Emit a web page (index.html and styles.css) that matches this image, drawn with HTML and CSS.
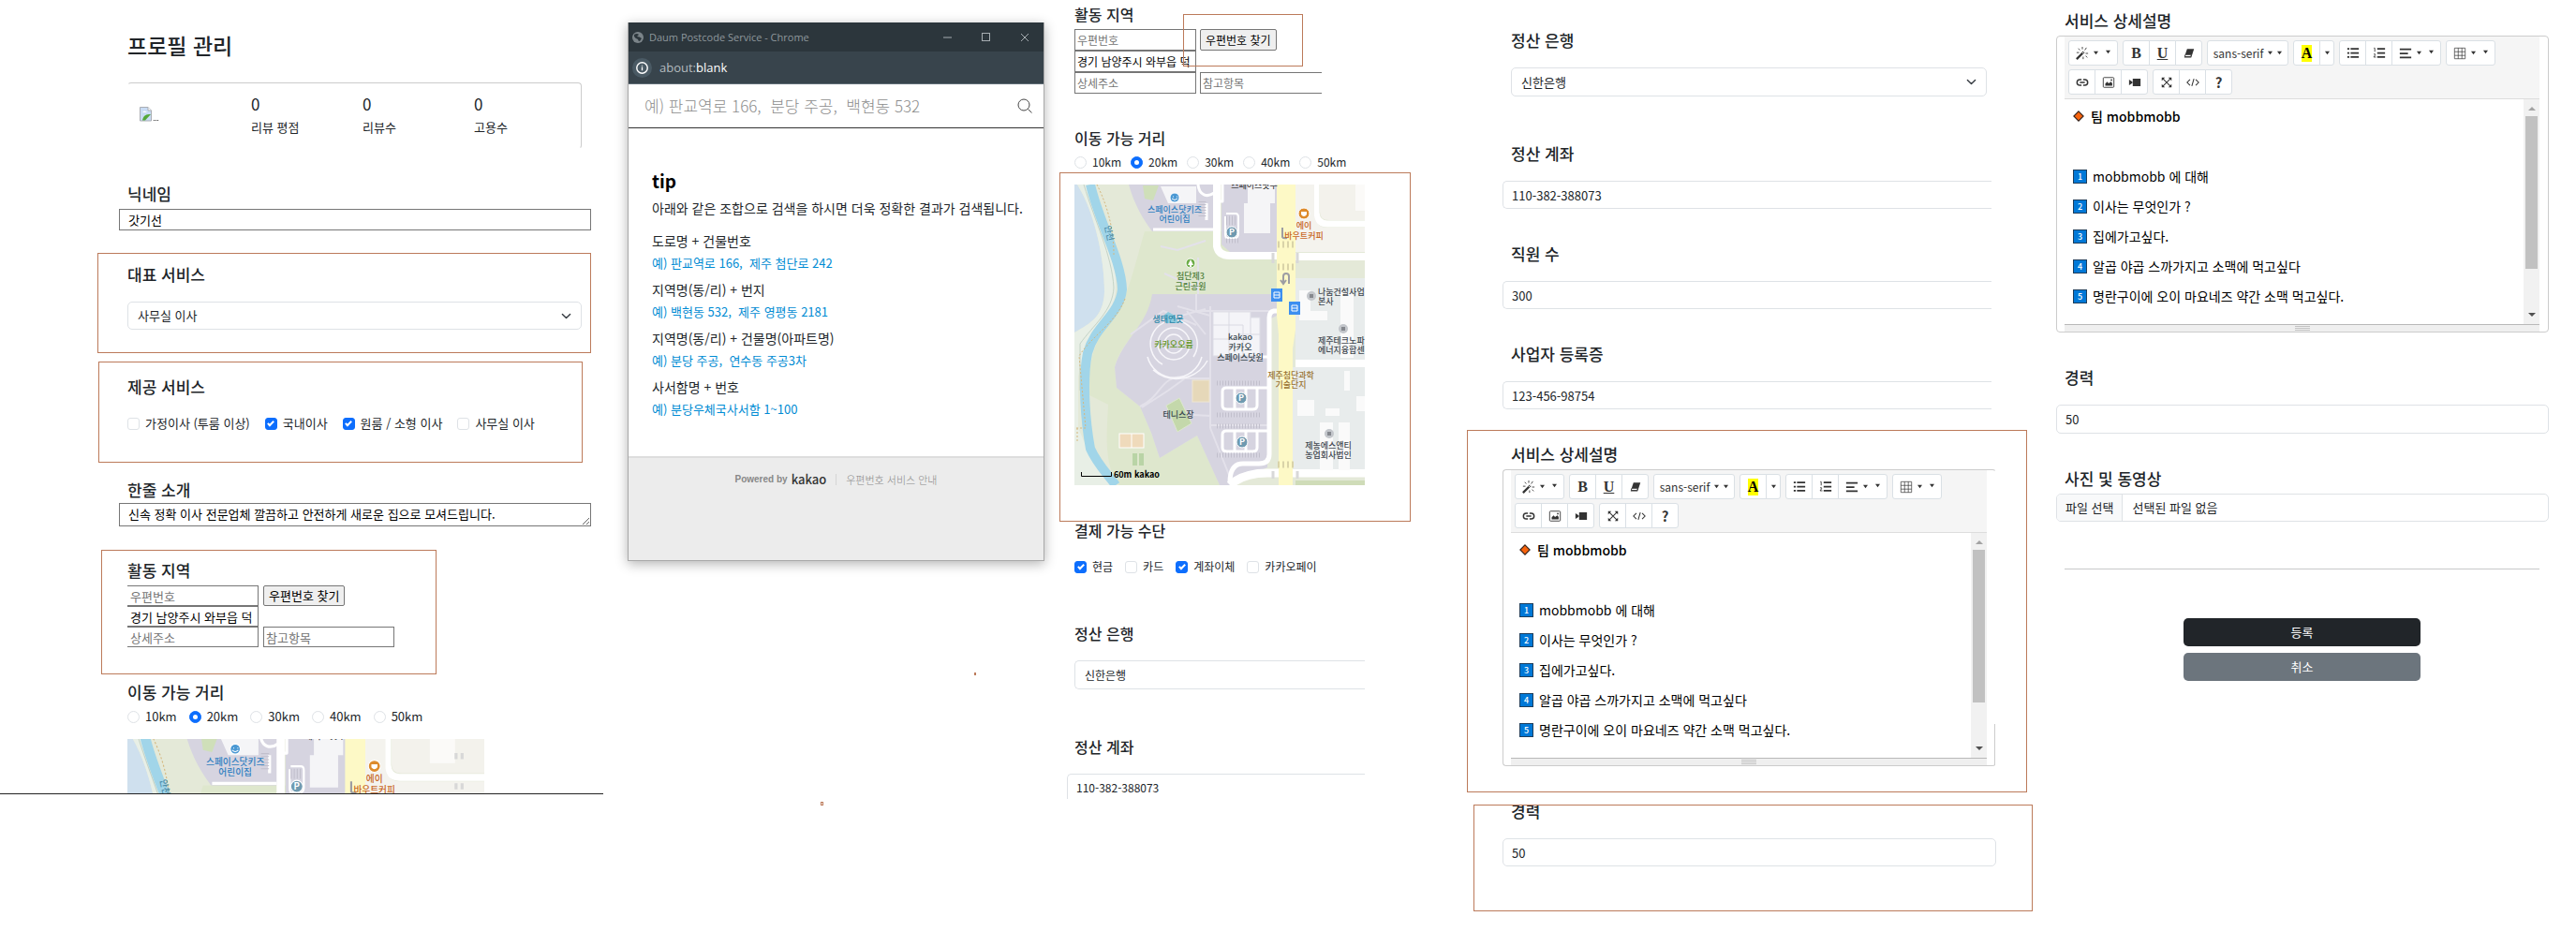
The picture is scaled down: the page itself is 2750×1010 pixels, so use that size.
FILE: index.html
```
<!DOCTYPE html>
<html lang="ko">
<head>
<meta charset="utf-8">
<meta name="viewport" content="width=device-width, initial-scale=1">
<title>프로필 관리</title>
<link rel="stylesheet" href="styles.css">
</head>
<body>
<svg class="defs" aria-hidden="true">
  <defs>
    <g id="map-art">
      <rect width="354" height="321" fill="#e4e9d8"/>
      <path d="M0 0H3C22 30 32 80 32 115C31 140 18 148 0 158Z" fill="#cfe0ee"/>
      <path d="M3 0H17C26 36 52 90 42 124C32 150 10 170 4 205V260L20 296L40 321H0V158C18 148 31 140 32 115C32 80 22 30 3 0Z" fill="#e8efe6"/>
      <path d="M10 0C22 40 40 75 42 110C41 135 20 150 6 170V220" fill="none" stroke="#c5d3c6"/>
      <path d="M75 50H216V117H83C84 145 50 165 43 195L45 217L70 237L82 265L91 292L131 268L155 321H48C30 300 35 260 36 235L16 225C14 190 22 160 45 140C60 110 66 80 75 50Z" fill="#dee7cd"/>
      <path d="M17 0C26 40 50 80 51 112C48 140 22 150 14 180C8 210 12 255 17 282C25 300 38 312 44 321" fill="none" stroke="#a1d5e9" stroke-width="10"/>
      <path d="M24 0C34 20 42 45 42 75M54 122C44 148 20 160 5 183L12 260H0M3 260V276" fill="none" stroke="#d5b77e" stroke-dasharray="2 2"/>
      <path d="M58 0C64 22 74 38 83 50H150V0ZM157 0H216V72H166L157 64ZM83 117H216V140L206 145V302L166 321H155L131 268L91 292L82 265L70 237L45 217L43 195C52 165 78 150 83 117Z" fill="#d6d4e0"/>
      <path d="M73 1H90L84 17L75 15Z" fill="#cfdfb9"/>
      <path d="M92 2H130V20H100ZM185 0H214V20H209V52H181V20H185Z" fill="#f5f5f7"/>
      <g fill="none" stroke="#e3e1ea" stroke-width="2">
        <path d="M92 66L110 70L140 60M96 95L130 110M132 78V117M130 117V135H216M145 130V260M145 207H118L100 220L72 238M145 247L110 245M145 257H206M70 237C95 225 90 205 118 205M60 160L95 135L130 150M145 260L165 310"/>
        <path d="M120 135L140 160M110 130L145 140M114 140L140 133"/>
      </g>
      <path d="M148 136H188V142H198V183H148Z" fill="#f4f4f8" stroke="#dddde6"/>
      <path d="M148 150H180V183M165 136V183M188 142V165H148M198 160H175" fill="none" stroke="#dadae3"/>
      <g fill="none" stroke="#f7f6fa" stroke-width="1.5">
        <circle cx="106" cy="170" r="10"/><circle cx="106" cy="170" r="17"/>
        <path d="M94 192A25 25 0 1 1 127 184M78 184A30 30 0 0 0 136 184M84 198A38 38 0 0 0 142 188"/>
      </g>
      <path d="M95 140L100 136L106 139L112 148H98Z" fill="#8cc9dd"/>
      <rect x="126" y="209" width="18" height="23" fill="#e6d8b9" stroke="#efe6d0"/>
      <path d="M98 236L112 228L125 255L110 264Z" fill="#c4d8ab" stroke="#dce8cc"/>
      <rect x="48" y="266" width="26" height="15" fill="#efdabb" stroke="#fff"/><path d="M61 266V281" stroke="#fff"/>
      <path d="M62 287H67V300H62ZM69 287H74V300H69Z" fill="#b9d4a6"/>
      <g fill="none" stroke="#fff" stroke-linejoin="round">
        <path d="M84 48H148" stroke-width="3"/>
        <path d="M152 0V66Q154 76 166 76H216M236 77H354" stroke-width="8"/>
        <path d="M162 31H172Q175 31 175 35V52Q175 57 171 57H163Q161 57 161 53V34" stroke-width="2"/>
        <path d="M158 0V18H153M132 0C133 12 142 14 149 9M141 20V38" stroke-width="3"/>
        <path d="M258 0V30Q259 42 270 42H354" stroke-width="7"/>
        <path d="M216 135H213Q208 136 208 142V288Q208 298 197 298H180Q166 298 166 318" stroke-width="5"/>
        <path d="M236 191H354M260 191V180M290 195V305" stroke-width="8"/>
        <path d="M166 321Q180 308 206 308H354" stroke-width="9"/>
        <path d="M208 217H162Q158 217 158 221V236Q158 240 163 240H190Q195 240 195 236V218M208 263H162Q158 263 158 267V281Q158 285 163 285H190Q195 285 195 281V264M171 218V240M183 218V240M171 264V285M183 264V285M195 184H206" stroke-width="3"/>
      </g>
      <path d="M162 36H174M162 41H174M162 60H176M135 18V36M138 18V36M152 212H200M152 246H200M152 258H200M152 289H200" fill="none" stroke="#c1bfcc" stroke-width="5" stroke-dasharray="1 2"/>
      <path d="M216 0H236V155L233 175V321H218V160L216 140Z" fill="#fdf9c6"/>
      <path d="M236 0H256V33Q258 46 270 46H354V72H236Z" fill="#f4f3ee"/>
      <path d="M262 0H354V38H272Q262 38 262 29Z" fill="#f3f2ec"/>
      <path d="M300 0H325V28H300Z" fill="#fbfaf8"/>
      <path d="M236 100H354V187H236ZM233 195H354V304H233Z" fill="#e8ecec"/>
      <path d="M240 113H252V135H270V145H240ZM284 115H298V185H284ZM238 230H256V247H238ZM268 239H283V247H268ZM288 199H294V220H288ZM262 254H276V305H262ZM282 254H294V305H282ZM301 226H312V242H301Z" fill="#fafafa"/>
      <path d="M236 316H354V321H236Z" fill="#cfdcb8"/>
      <path d="M217 64H235M217 88H235M217 299H235" stroke="#d9d3a8" stroke-width="7" stroke-dasharray="2 3"/>
      <path d="M212 73V84M238 73V84M212 306V314M238 306V314M326 18V24M332 18V24M326 48V54M332 48V54" stroke="#d8d8d8" stroke-width="3"/>
      <path d="M222 46V56Q223 58 227 57M229 106V98Q229 95 226 95Q223 95 223 98V105M220 102L223 106L226 102" fill="none" stroke="#9d9da3" stroke-width="2"/>
      <g fill="#3d8ff0"><rect x="210" y="111" width="12" height="14"/><rect x="229" y="125" width="12" height="14"/></g>
      <g fill="none" stroke="#fff"><path d="M213 115H219V121H213ZM213 118H219"/><path d="M232 129H238V135H232ZM232 132H238"/></g>
      <g stroke="#fff"><circle cx="107" cy="14" r="5" fill="#4a98d3"/><circle cx="245" cy="31" r="6" fill="#dd8b2c"/><circle cx="124" cy="84" r="5" fill="#6cac46"/>
        <circle cx="168" cy="51" r="6" fill="#6f9ab0"/><circle cx="178" cy="228" r="6" fill="#6f9ab0"/><circle cx="179" cy="275" r="6" fill="#6f9ab0"/></g>
      <path d="M105 13h1M109 13h1M104 15Q107 18 110 15" stroke="#fff" fill="none"/>
      <path d="M242 29H248V32Q245 36 242 32ZM124 80L127 86H121ZM123 86h2v2h-2z" fill="#fff"/>
      <g fill="#c3c6cb"><circle cx="253" cy="119" r="5"/><circle cx="287" cy="154" r="5"/><circle cx="272" cy="266" r="5"/></g>
      <g fill="#85888e"><path d="M251 117h4v4h-4zM285 152h4v4h-4zM270 264h4v4h-4z"/></g>
      <g class="map-text">
        <g fill="#fff" font-weight="700"><text x="168" y="54">P</text><text x="178" y="231">P</text><text x="179" y="278">P</text></g>
        <g fill="#2f7fc0"><text x="107" y="30">스페이스닷키즈</text><text x="107" y="40">어린이집</text></g>
        <g fill="#c8651b"><text x="245" y="47">에이</text><text x="245" y="58">바우트커피</text></g>
        <g fill="#4f7f3a"><text x="124" y="101">첨단제3</text><text x="124" y="112">근린공원</text></g>
        <text x="100" y="147" fill="#2b87a8">생태연못</text>
        <text x="106" y="174" fill="#5f9420">카카오오름</text>
        <text x="192" y="4" fill="#444">스페이스닷투</text>
        <g fill="#37474f"><text x="177" y="166">kakao</text><text x="177" y="177">카카오</text><text x="177" y="188">스페이스닷원</text><text x="111" y="249">테니스장</text></g>
        <g fill="#9a7434"><text x="231" y="207">제주첨단과학</text><text x="231" y="217">기술단지</text></g>
        <g fill="#3f474f" class="map-start"><text x="260" y="118">나눔건설사업본부</text><text x="260" y="128">본사</text><text x="260" y="170">제주테크노파크</text><text x="260" y="180">에너지융합센터</text></g>
        <g fill="#3f474f"><text x="271" y="282">제농에스앤티</text><text x="271" y="292">농업회사법인</text></g>
        <text x="37" y="55" fill="#4b8ca8" transform="rotate(78 37 52)">안천</text>
      </g>
    </g>

    <symbol id="i-wand" viewBox="0 0 16 16"><path d="M1 15L10 6" stroke="currentColor" stroke-width="2.6"/><path d="M8 8L10 6" stroke="#fff" stroke-width="1"/><path d="M8 0V3M3 2L5 4M13 1L11 4M4 7H1M12 8H15M12 11L14 13M9 12V15" stroke="currentColor" stroke-width="1"/></symbol>
    <symbol id="i-eraser" viewBox="0 0 16 16"><path d="M5.500 2.500H14L10.500 13H2Z" fill="currentColor"/><path d="M3.400 9.500H10.800L9.900 12H2.700Z" fill="#fff" stroke="currentColor"/></symbol>
    <symbol id="i-ul" viewBox="0 0 16 16"><path d="M1 2.500H3.500M1 7.500H3.500M1 12.500H3.500M5 2.500H15M5 7.500H15M5 12.500H15" stroke="currentColor" stroke-width="2"/></symbol>
    <symbol id="i-ol" viewBox="0 0 16 16"><path d="M5.500 2.500H15M5.500 7.500H15M5.500 12.500H15" stroke="currentColor" stroke-width="2"/><path d="M1.500 1.500H2.500V6M1.200 9Q3.500 8 3 10L1.200 12.500H4" fill="none" stroke="currentColor"/></symbol>
    <symbol id="i-align" viewBox="0 0 16 16"><path d="M1 3H15M1 8H11M1 13H15" stroke="currentColor" stroke-width="2"/></symbol>
    <symbol id="i-table" viewBox="0 0 16 16"><path d="M1.500 1.500H14.500V14.500H1.500ZM1.500 6H14.500M1.500 10.500H14.500M6 1.500V14.500M10.500 1.500V14.500" fill="none" stroke="currentColor" stroke-width=".8"/></symbol>
    <symbol id="i-link" viewBox="0 0 16 16"><path d="M7 11.500H5A3.500 3.500 0 0 1 5 4.500H7M9 4.500H11A3.500 3.500 0 0 1 11 11.500H9M5 8H11" fill="none" stroke="currentColor" stroke-width="1.700"/></symbol>
    <symbol id="i-image" viewBox="0 0 16 16"><rect x="1.500" y="2" width="13" height="12" rx="1" fill="none" stroke="currentColor"/><path d="M4 12V9.500L6.500 7L8 9L11 7L12.500 9V12Z" fill="currentColor"/><circle cx="11.500" cy="5" r="1" fill="currentColor"/></symbol>
    <symbol id="i-video" viewBox="0 0 16 16"><path d="M1 4.500L5 7.200V8.800L1 11.500ZM5.500 3.500H15V12.500H5.500Z" fill="currentColor"/></symbol>
    <symbol id="i-full" viewBox="0 0 16 16"><path d="M3 3L13 13M13 3L3 13" stroke="currentColor" stroke-width="1.200"/><path d="M2 2H6L2 6ZM14 2V6L10 2ZM2 14V10L6 14ZM14 14H10L14 10Z" fill="currentColor"/></symbol>
    <symbol id="i-code" viewBox="0 0 16 16"><path d="M4.500 4.500L1 8L4.500 11.500M11.500 4.500L15 8L11.500 11.500M9.300 3.500L6.700 12.500" fill="none" stroke="currentColor" stroke-width="1.200"/></symbol>
    <symbol id="i-caret" viewBox="0 0 6 6"><path d="M0 1H6L3 5Z" fill="currentColor"/></symbol>
    <symbol id="i-diamond" viewBox="0 0 14 14"><path d="M7 1L13 7L7 13L1 7Z" fill="#f7630c" stroke="#33211a" stroke-width="1.300"/></symbol>
  </defs>
</svg>

<main class="board">
  <section class="panel panel-profile">
    <h1 class="page-title">프로필 관리</h1>
    <div class="stats">
      <svg class="avatar" viewBox="0 0 20 16" role="img" aria-label="프로필 사진"><path d="M.5.500H9L12.500 4V15H.500Z" fill="#c9dcf5" stroke="#a9adb3"/><path d="M9 .500V4H12.500" fill="#fff" stroke="#a9adb3"/><path d="M3 6Q5 3 8 6Z" fill="#fff"/><path d="M3 14.500C4 9 7 8 12 8L6 14.500Z" fill="#54a83a"/><path d="M15 14.500H16M17 14.500H18M19 14.500H20" stroke="#333"/></svg>
      <div class="stat"><b>0</b><span>리뷰 평점</span></div>
      <div class="stat"><b>0</b><span>리뷰수</span></div>
      <div class="stat"><b>0</b><span>고용수</span></div>
    </div>

    <section class="field after-36">
      <label class="title" for="nick">닉네임</label>
      <input class="plain wide" id="nick" type="text" value="갓기선">
    </section>
    <section class="field after-35 framed frame-main">
      <label class="title spaced" for="main-service">대표 서비스</label>
      <select class="select" id="main-service"><option>사무실 이사</option></select>
    </section>
    <section class="field after-48 framed frame-services">
      <h2 class="title spaced">제공 서비스</h2>
      <div class="choices">
        <label><input type="checkbox">가정이사 (투룸 이상)</label>
        <label><input type="checkbox" checked>국내이사</label>
        <label><input type="checkbox" checked>원룸 / 소형 이사</label>
        <label><input type="checkbox">사무실 이사</label>
      </div>
    </section>
    <section class="field after-48">
      <label class="title tight" for="intro">한줄 소개</label>
      <textarea class="plain wide" id="intro" rows="1">신속 정확 이사 전문업체 깔끔하고 안전하게 새로운 집으로 모셔드립니다.</textarea>
    </section>
    <section class="field after-35 framed frame-area">
      <h2 class="title">활동 지역</h2>
      <div class="address">
        <input class="plain" type="text" placeholder="우편번호" aria-label="우편번호"><button class="native" type="button">우편번호 찾기</button>
        <input class="plain" type="text" value="경기 남양주시 와부읍 덕" aria-label="주소"><span></span>
        <input class="plain" type="text" placeholder="상세주소" aria-label="상세주소"><input class="plain" type="text" placeholder="참고항목" aria-label="참고항목">
      </div>
    </section>
    <section class="field after-36">
      <h2 class="title">이동 가능 거리</h2>
      <div class="choices distances">
        <label><input type="radio" name="d1">10km</label>
        <label><input type="radio" name="d1" checked>20km</label>
        <label><input type="radio" name="d1">30km</label>
        <label><input type="radio" name="d1">40km</label>
        <label><input type="radio" name="d1">50km</label>
      </div>
      <svg class="map map-strip" viewBox="0 4 354 54" preserveAspectRatio="xMinYMin slice" role="img" aria-label="지도"><use href="#map-art"/></svg>
    </section>
    <hr class="cut">
  </section>

  <section class="panel panel-popup">
    <div class="window">
      <header class="titlebar">
        <svg viewBox="0 0 12 12" class="globe"><circle cx="6" cy="6" r="6" fill="#7b8489"/><path d="M2 3Q5 1 7 3L5 5Q8 5 10 7L8 10Q6 10 6 8Q3 7 2 5Z" fill="#2c363c"/></svg>
        <span>Daum Postcode Service - Chrome</span>
        <svg viewBox="0 0 92 10" class="controls"><path d="M0 5H9M83 1L91 9M91 1L83 9" stroke="#a6adb1"/><rect x="41.500" y=".5" width="8" height="8" fill="none" stroke="#a6adb1"/></svg>
      </header>
      <div class="urlbar">
        <svg viewBox="0 0 22 22"><circle cx="11" cy="11" r="11" fill="#4a5a64"/><circle cx="11" cy="11" r="6" fill="none" stroke="#fff" stroke-width="1.500"/><path d="M11 8V9M11 10V14" stroke="#fff" stroke-width="1.400"/></svg>
        <span>about:<b>blank</b></span>
      </div>
      <div class="search">
        <input type="text" placeholder="예) 판교역로 166,  분당 주공,  백현동 532" aria-label="주소 검색">
        <button type="button" aria-label="검색"><svg viewBox="0 0 16 16"><circle cx="7" cy="7" r="6" fill="none" stroke="#444"/><path d="M11.500 11.500L15.500 15.500" stroke="#444"/></svg></button>
      </div>
      <div class="tip">
        <h2>tip</h2>
        <p>아래와 같은 조합으로 검색을 하시면 더욱 정확한 결과가 검색됩니다.</p>
        <dl>
          <dt>도로명 + 건물번호</dt><dd>예) 판교역로 166,&nbsp; 제주 첨단로 242</dd>
          <dt>지역명(동/리) + 번지</dt><dd>예) 백현동 532,&nbsp; 제주 영평동 2181</dd>
          <dt>지역명(동/리) + 건물명(아파트명)</dt><dd>예) 분당 주공,&nbsp; 연수동 주공3차</dd>
          <dt>사서함명 + 번호</dt><dd>예) 분당우체국사서함 1~100</dd>
        </dl>
      </div>
      <footer class="powered">
        <span class="by">Powered by</span><span class="kakao">kakao</span><a href="#">우편번호 서비스 안내</a>
      </footer>
    </div>
    <i class="speck speck-solid"></i>
    <i class="speck speck-open"></i>
  </section>

  <section class="panel panel-area">
    <section class="field framed frame-find">
      <h2 class="title">활동 지역</h2>
      <div class="address address-cut">
        <input class="plain" type="text" placeholder="우편번호" aria-label="우편번호"><button class="native" type="button">우편번호 찾기</button>
        <input class="plain" type="text" value="경기 남양주시 와부읍 덕" aria-label="주소"><span></span>
        <input class="plain" type="text" placeholder="상세주소" aria-label="상세주소"><input class="plain open-end" type="text" placeholder="참고항목" aria-label="참고항목">
      </div>
    </section>
    <section class="field after-35">
      <h2 class="title">이동 가능 거리</h2>
      <div class="choices distances">
        <label><input type="radio" name="d2">10km</label>
        <label><input type="radio" name="d2" checked>20km</label>
        <label><input type="radio" name="d2">30km</label>
        <label><input type="radio" name="d2">40km</label>
        <label><input type="radio" name="d2">50km</label>
      </div>
      <div class="framed frame-map">
        <svg class="map map-full" viewBox="0 0 310 321" preserveAspectRatio="xMinYMin slice" role="img" aria-label="지도">
          <use href="#map-art"/>
          <path d="M7.500 307V311.500H39.500V307" fill="none" stroke="#000"/>
          <g class="map-text map-start map-scale"><text x="42" y="313">60m</text><text x="64" y="313">kakao</text></g>
        </svg>
      </div>
    </section>
    <section class="field after-36">
      <h2 class="title spaced">결제 가능 수단</h2>
      <div class="choices">
        <label><input type="checkbox" checked>현금</label>
        <label><input type="checkbox">카드</label>
        <label><input type="checkbox" checked>계좌이체</label>
        <label><input type="checkbox">카카오페이</label>
      </div>
    </section>
    <section class="field after-48">
      <label class="title spaced" for="bank-a">정산 은행</label>
      <select class="select open-end" id="bank-a"><option>신한은행</option></select>
    </section>
    <section class="field after-48">
      <label class="title spaced" for="account-a">정산 계좌</label>
      <input class="control open-end open-bottom" id="account-a" type="text" value="110-382-388073">
    </section>
  </section>

  <section class="panel panel-account">
    <section class="field">
      <label class="title spaced" for="bank-b">정산 은행</label>
      <select class="select" id="bank-b"><option>신한은행</option></select>
    </section>
    <section class="field after-48">
      <label class="title spaced" for="account-b">정산 계좌</label>
      <input class="control open-end" id="account-b" type="text" value="110-382-388073">
    </section>
    <section class="field after-36">
      <label class="title spaced" for="staff">직원 수</label>
      <input class="control open-end" id="staff" type="text" value="300">
    </section>
    <section class="field after-36">
      <label class="title spaced" for="licence">사업자 등록증</label>
      <input class="control open-end" id="licence" type="text" value="123-456-98754">
    </section>
    <section class="field after-36 framed frame-editor">
      <h2 class="title">서비스 상세설명</h2>
      <div class="editor editor-part">
        <div class="editor-inner">
          <div class="toolbar">
            <div class="group"><button type="button" class="menu" aria-label="스타일"><svg><use href="#i-wand"/></svg><svg class="caret"><use href="#i-caret"/></svg><svg class="caret far"><use href="#i-caret"/></svg></button></div>
            <div class="group"><button type="button" class="serif">B</button><button type="button" class="serif under">U</button><button type="button" aria-label="지우기"><svg><use href="#i-eraser"/></svg></button></div>
            <div class="group"><button type="button" class="font">sans-serif<svg class="caret"><use href="#i-caret"/></svg><svg class="caret"><use href="#i-caret"/></svg></button></div>
            <div class="group"><button type="button" class="serif"><mark>A</mark></button><button type="button" class="drop" aria-label="색상"><svg class="caret"><use href="#i-caret"/></svg></button></div>
            <div class="group"><button type="button" aria-label="목록"><svg><use href="#i-ul"/></svg></button><button type="button" aria-label="번호 목록"><svg><use href="#i-ol"/></svg></button><button type="button" class="menu" aria-label="정렬"><svg><use href="#i-align"/></svg><svg class="caret"><use href="#i-caret"/></svg><svg class="caret far"><use href="#i-caret"/></svg></button></div>
            <div class="group"><button type="button" class="menu" aria-label="표"><svg><use href="#i-table"/></svg><svg class="caret"><use href="#i-caret"/></svg><svg class="caret far"><use href="#i-caret"/></svg></button></div>
            <div class="group"><button type="button" aria-label="링크"><svg><use href="#i-link"/></svg></button><button type="button" aria-label="사진"><svg><use href="#i-image"/></svg></button><button type="button" aria-label="동영상"><svg><use href="#i-video"/></svg></button></div>
            <div class="group"><button type="button" aria-label="전체 화면"><svg><use href="#i-full"/></svg></button><button type="button" aria-label="코드"><svg><use href="#i-code"/></svg></button><button type="button" class="help">?</button></div>
          </div>
          <div class="editing">
            <div class="text">
              <p class="team"><svg><use href="#i-diamond"/></svg>팀 mobbmobb</p>
              <p></p>
              <p><i>1</i>mobbmobb 에 대해</p>
              <p><i>2</i>이사는 무엇인가 ?</p>
              <p><i>3</i>집에가고싶다.</p>
              <p><i>4</i>알곱 야곱 스까가지고 소맥에 먹고싶다</p>
              <p><i>5</i>명란구이에 오이 마요네즈 약간 소맥 먹고싶다.</p>
            </div>
            <div class="scroll"><span class="up"></span><span class="thumb"></span><span class="down"></span></div>
          </div>
          <div class="status"><span></span></div>
        </div>
      </div>
    </section>
    <section class="field after-36 framed frame-career">
      <label class="title spaced title-cut" for="career-a">경력</label>
      <input class="control" id="career-a" type="text" value="50">
    </section>
  </section>

  <section class="panel panel-detail">
    <section class="field">
      <h2 class="title">서비스 상세설명</h2>
      <div class="editor">
        <div class="editor-inner">
          <div class="toolbar">
            <div class="group"><button type="button" class="menu" aria-label="스타일"><svg><use href="#i-wand"/></svg><svg class="caret"><use href="#i-caret"/></svg><svg class="caret far"><use href="#i-caret"/></svg></button></div>
            <div class="group"><button type="button" class="serif">B</button><button type="button" class="serif under">U</button><button type="button" aria-label="지우기"><svg><use href="#i-eraser"/></svg></button></div>
            <div class="group"><button type="button" class="font">sans-serif<svg class="caret"><use href="#i-caret"/></svg><svg class="caret"><use href="#i-caret"/></svg></button></div>
            <div class="group"><button type="button" class="serif"><mark>A</mark></button><button type="button" class="drop" aria-label="색상"><svg class="caret"><use href="#i-caret"/></svg></button></div>
            <div class="group"><button type="button" aria-label="목록"><svg><use href="#i-ul"/></svg></button><button type="button" aria-label="번호 목록"><svg><use href="#i-ol"/></svg></button><button type="button" class="menu" aria-label="정렬"><svg><use href="#i-align"/></svg><svg class="caret"><use href="#i-caret"/></svg><svg class="caret far"><use href="#i-caret"/></svg></button></div>
            <div class="group"><button type="button" class="menu" aria-label="표"><svg><use href="#i-table"/></svg><svg class="caret"><use href="#i-caret"/></svg><svg class="caret far"><use href="#i-caret"/></svg></button></div>
            <div class="group"><button type="button" aria-label="링크"><svg><use href="#i-link"/></svg></button><button type="button" aria-label="사진"><svg><use href="#i-image"/></svg></button><button type="button" aria-label="동영상"><svg><use href="#i-video"/></svg></button></div>
            <div class="group"><button type="button" aria-label="전체 화면"><svg><use href="#i-full"/></svg></button><button type="button" aria-label="코드"><svg><use href="#i-code"/></svg></button><button type="button" class="help">?</button></div>
          </div>
          <div class="editing">
            <div class="text">
              <p class="team"><svg><use href="#i-diamond"/></svg>팀 mobbmobb</p>
              <p></p>
              <p><i>1</i>mobbmobb 에 대해</p>
              <p><i>2</i>이사는 무엇인가 ?</p>
              <p><i>3</i>집에가고싶다.</p>
              <p><i>4</i>알곱 야곱 스까가지고 소맥에 먹고싶다</p>
              <p><i>5</i>명란구이에 오이 마요네즈 약간 소맥 먹고싶다.</p>
            </div>
            <div class="scroll"><span class="up"></span><span class="thumb"></span><span class="down"></span></div>
          </div>
          <div class="status"><span></span></div>
        </div>
      </div>
    </section>
    <section class="field after-36">
      <label class="title spaced" for="career-b">경력</label>
      <input class="control" id="career-b" type="text" value="50">
    </section>
    <section class="field after-36">
      <h2 class="title">사진 및 동영상</h2>
      <label class="file"><input type="file" multiple><span class="file-button">파일 선택</span><span>선택된 파일 없음</span></label>
    </section>
    <hr class="divider">
    <div class="actions">
      <button type="submit" class="submit">등록</button>
      <button type="button" class="cancel">취소</button>
    </div>
  </section>
</main>
</body>
</html>
```
FILE: styles.css
```
*, *::before, *::after { box-sizing: border-box; }

body {
  margin: 0;
  background: #fff;
  color: #212529;
  font: 13px/20px "Noto Sans CJK KR", "Liberation Sans", sans-serif;
}

h1, h2, p, dl, dd { margin: 0; }
input, select, textarea, button { font: inherit; color: inherit; margin: 0; }
svg { flex: none; }
.defs { position: absolute; width: 0; height: 0; }

.board {
  display: grid;
  grid-template-columns: 644fr 487fr 435fr 610fr 574fr;
  align-items: start;
}
.panel { min-width: 0; }
.panel-profile { padding: 32px 23px 0 136px; }
.panel-popup { position: relative; padding: 24px 16px 272px 26px; }
.panel-area { padding: 3px 109px 0 16px; font-size: 12px; }
.panel-account { padding: 31px 55px 84px 47px; }
.panel-detail { padding: 10px 39px 0 28px; }

/* Headings and spacing */
.page-title { font-size: 23px; line-height: 32px; font-weight: 500; }
.title { display: block; font-size: 17px; line-height: 24px; font-weight: 500; margin-bottom: 4px; }
.panel-area .title { font-size: 16px; }
.title.spaced { margin-bottom: 17px; }
.title.tight { margin-bottom: 2px; }
.title-cut { clip-path: inset(6px 0 0 0); }
.after-35 { margin-top: 35px; }
.after-36 { margin-top: 36px; }
.after-48 { margin-top: 49px; }

/* Annotation frames drawn over a section */
.framed { position: relative; }
.framed::after {
  content: "";
  position: absolute;
  border: 1px solid #bc7a5a;
  pointer-events: none;
}
.frame-main::after { inset: -11px -10px -25px -32px; }
.frame-services::after { inset: -15px -1px -32px -31px; }
.frame-area::after { inset: -10px auto -29px -28px; width: 358px; }
.frame-find::after { inset: 12px auto auto 116px; width: 128px; height: 56px; }
.frame-map::after { inset: -13px -49px -39px -16px; }
.frame-editor::after { inset: -14px -43px -28px -47px; }
.frame-career::after { inset: 5px -49px -48px -40px; }

/* Profile figures */
.stats {
  display: grid;
  grid-template-columns: repeat(3, 119px) 1fr;
  height: 71px;
  margin-top: 24px;
  padding: 11px 0 0 12px;
  border: 1px solid #ccc;
  border-left-color: transparent;
  border-bottom-color: transparent;
  border-radius: 4px;
}
.avatar { width: 20px; height: 16px; margin-top: 14px; }
.stat b { display: block; font-size: 17px; line-height: 22px; font-weight: 400; }
.stat span { display: block; line-height: 20px; margin-top: 4px; }

/* Form controls */
.plain {
  display: block;
  width: 100%;
  height: 23px;
  padding: 0 2px;
  border: 1px solid #767676;
  border-radius: 0;
  background: #fff;
  color: #000;
}
.plain::placeholder { color: #757575; }
.wide { width: calc(100% + 19px); margin: 0 -10px 0 -9px; padding: 0 9px; }
textarea.plain { height: 25px; padding: 1px 9px; overflow: hidden; resize: both; }

.address { display: grid; grid-template-columns: 140px 140px; column-gap: 5px; }
.address .plain { height: 22px; }
.address-cut { grid-template-columns: 130px 130px; column-gap: 4px; }
.address-cut .plain, .address-cut .native { height: 23px; }
.panel-profile .address .plain:nth-child(odd) { border-left: 0; padding-left: 3px; }
.native {
  justify-self: start;
  height: 22px;
  padding: 0 5px;
  border: 1px solid #767676;
  border-radius: 2px;
  background: #efefef;
  color: #000;
  line-height: 20px;
  white-space: nowrap;
}

.select, .control, .file {
  display: block;
  width: 100%;
  height: 31px;
  border: 1px solid #dee2e6;
  border-radius: 5px;
  background: #fff;
}
.panel-profile .select, .panel-account .control, .file { height: 30px; }
.select {
  appearance: none;
  padding: 0 30px 0 10px;
  background: #fff url("data:image/svg+xml,%3Csvg xmlns='http://www.w3.org/2000/svg' viewBox='0 0 16 16'%3E%3Cpath fill='none' stroke='%23343a40' stroke-linecap='round' stroke-linejoin='round' stroke-width='2' d='m2 5 6 6 6-6'/%3E%3C/svg%3E") no-repeat right 10px center / 11px 11px;
}
.control { width: calc(100% + 19px); margin: 0 -10px 0 -9px; padding: 0 9px; }
.panel-area .control { width: calc(100% + 8px); margin: 0 0 0 -8px; }
.panel-account .control.open-end { width: calc(100% + 14px); margin-right: -5px; }
.open-end { border-right: 0; border-top-right-radius: 0; border-bottom-right-radius: 0; background-image: none; }
.panel-area .open-bottom { height: 27px; border-bottom: 0; border-bottom-left-radius: 0; }

.choices { display: flex; gap: 16px; white-space: nowrap; }
.choices label { display: flex; align-items: center; gap: 6px; }
.distances { gap: 13px; }
.panel-area .choices { gap: 13px; }
.panel-area .distances { gap: 10px; }
.choices input {
  appearance: none;
  display: grid;
  place-items: center;
  width: 13px;
  height: 13px;
  border: 1px solid #dee2e6;
  border-radius: 3px;
  background: #fff;
}
.choices input[type="radio"] { border-radius: 50%; }
.choices input:checked { background: #0d6efd; border-color: #0d6efd; }
.choices input[type="radio"]:checked::after { content: ""; width: 5px; height: 5px; border-radius: 50%; background: #fff; }
.choices input[type="checkbox"]:checked::after {
  content: "";
  width: 4px;
  height: 7px;
  margin-bottom: 2px;
  border: solid #fff;
  border-width: 0 2px 2px 0;
  transform: rotate(45deg);
}

/* Map */
.map { display: block; width: 100%; margin-top: 14px; overflow: hidden; }
.map-strip { width: 381px; max-width: 100%; height: 58px; }
.map-full { height: 321px; }
.map-text { font-size: 9px; font-weight: 500; text-anchor: middle; }
.map-start { text-anchor: start; }
.map-scale { font-weight: 700; }
.cut { height: 1px; margin: 0 -23px 0 -136px; border: 0; background: #222; }

/* Postcode window */
.window {
  border: 1px solid #a9a9a9;
  border-top: 0;
  background: #ececec;
  box-shadow: 0 3px 12px rgba(0, 0, 0, .3);
}
.titlebar {
  display: flex;
  align-items: center;
  gap: 6px;
  height: 31px;
  padding: 0 15px 0 4px;
  background: #2c363c;
  color: #8f989d;
  font: 12px/20px "Open Sans", sans-serif;
}
.titlebar span { font-size: 11px; }
.globe { width: 12px; height: 12px; }
.controls { width: 92px; height: 10px; margin-left: auto; }
.urlbar {
  display: flex;
  align-items: center;
  gap: 8px;
  height: 35px;
  padding: 0 4px;
  border-bottom: 1px solid #5f6c75;
  background: #38444c;
  color: #b4bbbf;
  font: 13px/20px "Open Sans", sans-serif;
}
.urlbar svg { width: 21px; height: 21px; }
.urlbar b { color: #fff; font-weight: 400; }
.search { display: flex; align-items: center; height: 47px; padding: 0 12px 0 17px; border-bottom: 1px solid #333; background: #fff; }
.search input { flex: 1; min-width: 0; padding: 0; border: 0; outline: 0; font-size: 17px; font-weight: 300; line-height: 26px; white-space: pre; }
.search input::placeholder { color: #8c8c8c; }
.search button { padding: 0; border: 0; background: none; }
.search svg { display: block; width: 16px; height: 16px; }
.tip { padding: 43px 25px 34px; border-bottom: 2px solid #ddd; background: #fff; }
.tip h2 { color: #000; font-size: 19px; line-height: 26px; font-weight: 700; }
.tip p { margin: 6px 0 13px; font-size: 14px; line-height: 20px; white-space: nowrap; }
.tip dt { font-size: 14px; line-height: 24px; }
.tip dd { margin-bottom: 4px; color: #008bd3; line-height: 24px; }
.powered { display: flex; align-items: center; justify-content: center; height: 109px; padding-bottom: 64px; font-size: 12px; }
.by { color: #888; font: 700 10px/20px "Liberation Sans", sans-serif; }
.kakao { margin-left: 4px; color: #333; font-size: 13px; font-weight: 500; }
.powered a { margin-left: 10px; padding-left: 10px; border-left: 1px solid #d5d5d5; color: #888; font-size: 11px; font-weight: 300; line-height: 12px; text-decoration: none; }
.speck { position: absolute; border: 1px solid #bc7a5a; }
.speck-solid { left: 396px; top: 718px; width: 2px; height: 3px; background: #bc7a5a; }
.speck-open { left: 232px; top: 856px; width: 3px; height: 4px; }

/* Text editor */
.editor { margin: 0 -10px 0 -9px; padding: 0 10px 0 9px; border: 1px solid #ccc; border-radius: 4px; }
.editor .editor-inner { margin: 0 -1px; }
.editor-part { border-right-color: transparent; background: linear-gradient(#ccc, #ccc) no-repeat right bottom / 1px 44px; }
.toolbar { display: flex; flex-wrap: wrap; gap: 4px 5px; padding: 4px; border-bottom: 1px solid #ddd; background: #f5f5f5; color: #333; }
.group { display: flex; }
.group button {
  display: flex;
  align-items: center;
  justify-content: center;
  gap: 5px;
  width: 29px;
  height: 27px;
  padding: 0;
  border: 1px solid #dae0e5;
  background: #fff;
}
.group button + button { margin-left: -1px; }
.group button:first-child { border-radius: 3px 0 0 3px; }
.group button:last-child { border-radius: 0 3px 3px 0; }
.group button:only-child { border-radius: 3px; }
.group svg { width: 14px; height: 14px; }
.group svg.caret { width: 5px; height: 5px; }
.group svg.far { margin: 0 0 3px 3px; }
.group .menu { width: 53px; }
.group .font { width: 87px; font-size: 12px; }
.group .drop { width: 16px; }
.group .serif { font: 700 16px/18px "Liberation Serif", serif; }
.group .under { text-decoration: underline; }
.group .help { font-size: 15px; font-weight: 700; }
mark { padding: 0; background: #ff0; color: #000; }
.editing { display: flex; height: 240px; color: #000; }
.text { flex: 1; min-width: 0; padding: 7px 9px 0; font-size: 14px; line-height: 22px; }
.text p { display: flex; align-items: center; height: 22px; margin-bottom: 10px; }
.text svg { width: 12px; height: 12px; margin-right: 7px; }
.text i {
  width: 15px;
  margin-right: 6px;
  border: 1px solid #1f3e5c;
  background: #0078d7;
  color: #fff;
  font: 500 9px/13px "Noto Sans CJK KR", sans-serif;
  text-align: center;
}
.text .team { font-weight: 500; }
.scroll { display: flex; flex-direction: column; align-items: center; width: 17px; padding: 8px 0; background: #f1f1f1; }
.up, .down { border: 4px solid transparent; border-top-width: 0; border-bottom: 4px solid #a3a3a3; }
.down { margin-top: auto; border-top: 4px solid #505050; border-bottom-width: 0; }
.thumb { width: 13px; height: 163px; margin-top: 6px; background: #c1c1c1; }
.status { display: grid; place-items: center; height: 8px; border-top: 1px solid #b9b9b9; background: #efefef; }
.status span { width: 16px; height: 5px; border: solid #c3c3c3; border-width: 1px 0; background: linear-gradient(#c3c3c3, #c3c3c3) no-repeat center / 100% 1px; }

/* File picker and actions */
.file { display: flex; align-items: center; position: relative; width: calc(100% + 19px); margin: 0 -10px 0 -9px; overflow: hidden; }
.file input { position: absolute; width: 1px; height: 1px; opacity: 0; }
.file-button { margin-right: 10px; padding: 5px 9px; border-right: 1px solid #dee2e6; background: #f8f9fa; }
.divider { height: 1px; margin: 50px 0 52px; border: 0; background: #c8c9ca; }
.actions { display: grid; gap: 7px; width: 50%; margin: 0 auto; }
.actions button { height: 30px; border: 0; border-radius: 5px; color: #fff; }
.submit { background: #212529; }
.cancel { background: #6c757d; }
```
